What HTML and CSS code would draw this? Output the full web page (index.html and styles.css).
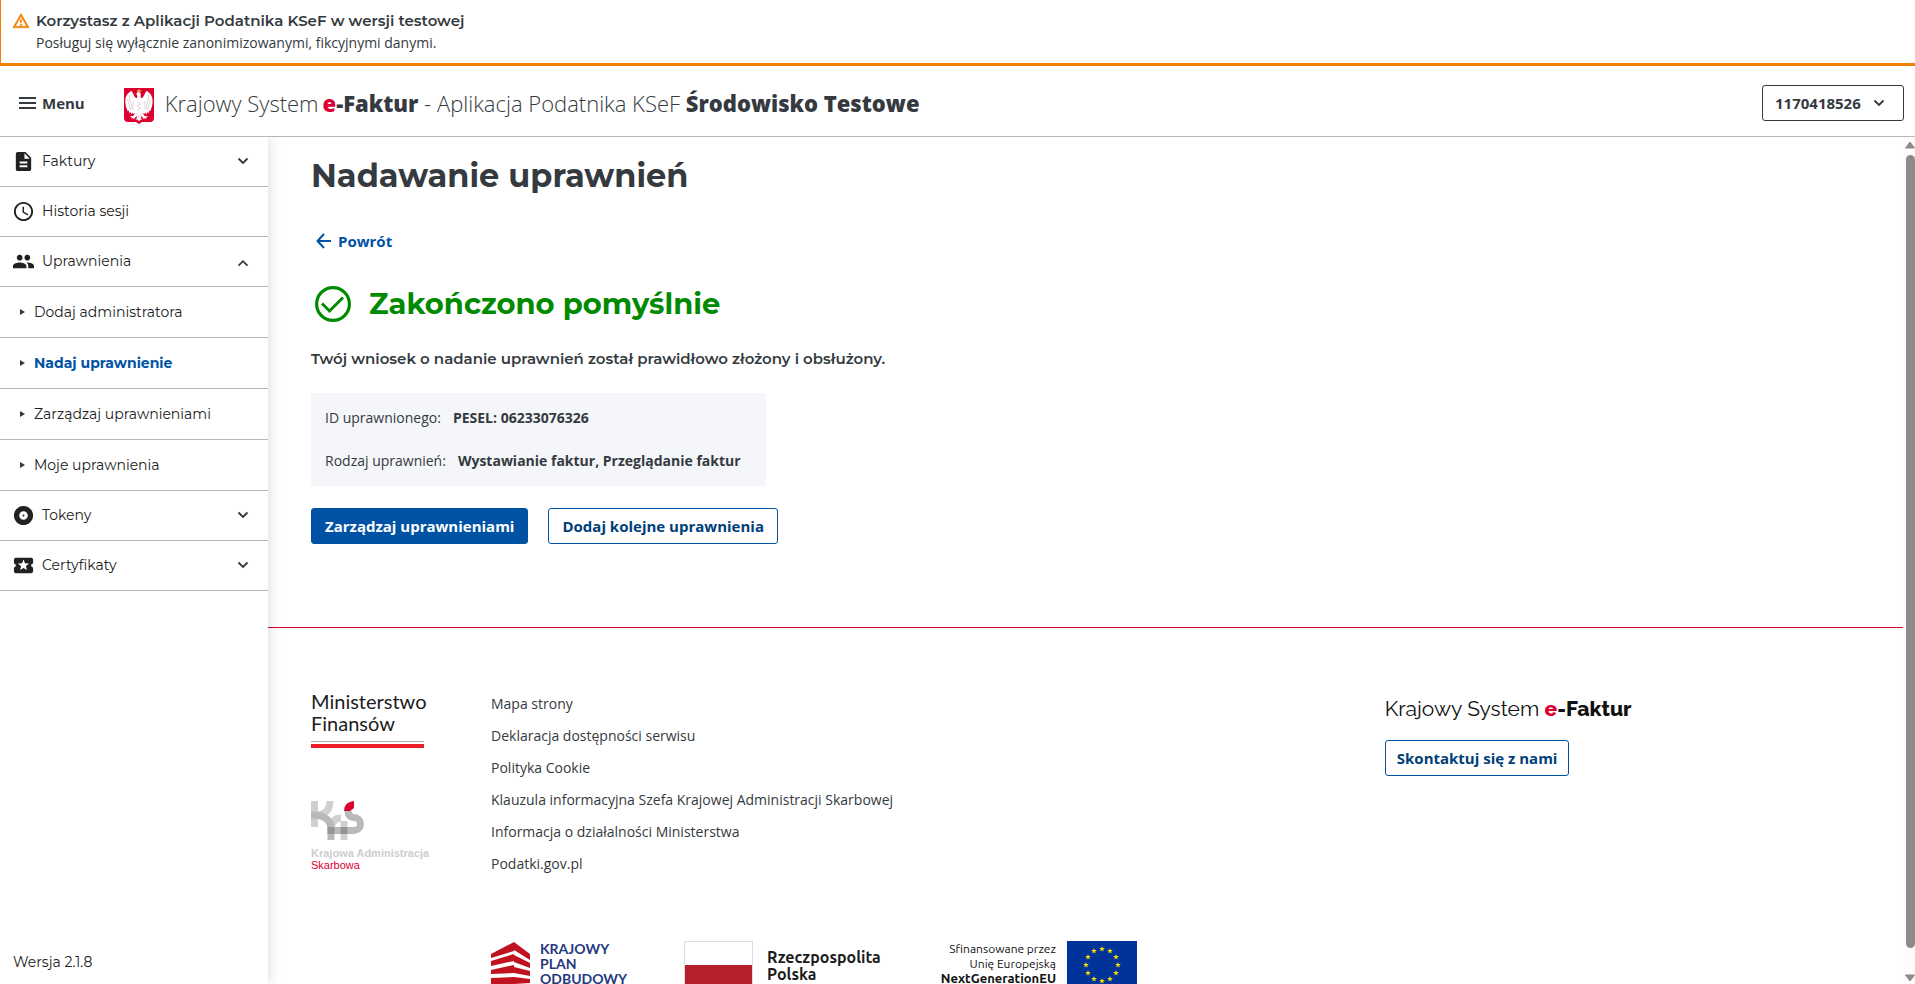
FILE: index.html
```html
<!DOCTYPE html>
<html lang="pl">
<head>
<meta charset="utf-8">
<meta name="viewport" content="width=device-width, initial-scale=1">
<title>Nadawanie uprawnień – Aplikacja Podatnika KSeF</title>
<link rel="stylesheet" href="styles.css">
</head>
<body>
<div class="banner" role="status">
  <svg class="banner-icon" viewBox="0 0 24 24" aria-hidden="true"><path fill="#f08000" stroke="#f08000" stroke-width=".6" d="M12 5.990 19.530 19H4.470L12 5.990M12 2 1 21h22L12 2zm1 14h-2v2h2v-2zm0-6h-2v4h2v-4z"/></svg>
  <div>
    <strong class="banner-title">Korzystasz z Aplikacji Podatnika KSeF w wersji testowej</strong>
    <p class="banner-text">Posługuj się wyłącznie zanonimizowanymi, fikcyjnymi danymi.</p>
  </div>
</div>

<header class="header">
  <button class="menu-button" type="button">
    <svg width="17" height="12" viewBox="0 0 17 12" aria-hidden="true"><path fill="#343a40" d="M0 0h17v2H0zM0 5h17v2H0zM0 10h17v2H0z"/></svg>
    Menu
  </button>
  <svg class="emblem" viewBox="0 0 30 36" role="img" aria-label="Godło Polski">
    <path fill="#dc0032" d="M0 0h30v30q0 4-4 4h-8l-3 2-3-2H4q-4 0-4-4z"/>
    <path fill="#fff" d="M14.200 4c-1.800.4-2 2-1.200 3.200.7 1.200.3 2.300-.6 3C10.500 9.500 9.600 6 7.700 3 4 4.300 1.500 8 1.300 12.500c-.2 4.200 1 8 2.600 11l1-1.200.3 3 1.400-1.500.5 2.700 1.600-2 .4 1.400 1.700-1c-.3 1.600-1 2.600-2.300 3.100l-2.800.3 2 1-.6 1.500 2.200-.9.500 1.600 1.500-2.300 1.700-1.300-.3 2.400-1.400 1.200 2 .1L15 33.300l1.600-1.700h2l-1.400-1.200-.3-2.400 1.700 1.300 1.500 2.300.5-1.600 2.200.9-.6-1.500 2-1-2.800-.3c-1.300-.5-2-1.500-2.300-3.100l1.700 1 .4-1.400 1.600 2 .5-2.700 1.400 1.500.3-3 1 1.200c1.600-3 2.800-6.800 2.600-11C28.500 8 26 4.300 22.300 3c-1.900 3-2.800 6.500-4.700 7.200-1-.8-1.200-2-.9-3.200.3-1.700-.8-3.200-2.500-3z"/>
    <path fill="none" stroke="#d8ccd0" stroke-width=".8" d="M5 7l3 14M3.500 11l3 11M9 13v9M25 7l-3 14M26.500 11l-3 11M21 13v9M13 14l4 2-4 2 4 2-4 2M12 25l3 4 3-4"/>
    <path fill="#eab02c" d="M13 3.800 12.700 2l1.200.6L15 1l1.100 1.600 1.200-.6-.3 1.800zM12.700 5l-1.500 1 1.600.3z"/>
  </svg>
  <div class="app-title">
    <span class="app-name">Krajowy System</span><b class="app-brand"><span class="red">e</span>-Faktur</b> - Aplikacja Podatnika KSeF <b>Środowisko Testowe</b>
  </div>
  <button class="account-button" type="button">1170418526
    <svg class="chevron" viewBox="0 0 12 8" aria-hidden="true"><path d="M1.500 1.500 6 6l4.500-4.500"/></svg>
  </button>
</header>

<div class="shell">
  <nav class="sidebar" aria-label="Menu główne">
    <ul class="nav-list">
      <li><button class="nav-item" type="button">
        <svg class="nav-icon" viewBox="0 0 24 24" aria-hidden="true"><path d="M14 2H6c-1.100 0-2 .9-2 2v16c0 1.100.9 2 2 2h12c1.100 0 2-.9 2-2V8l-6-6zm2 16H8v-2h8v2zm0-4H8v-2h8v2zm-3-5V3.500L18.500 9H13z"/></svg>
        <span>Faktury</span>
        <svg class="chevron" viewBox="0 0 12 8" aria-hidden="true"><path d="M1.500 1.500 6 6l4.500-4.500"/></svg></button></li>
      <li><a class="nav-item" href="#historia">
        <svg class="nav-icon" viewBox="0 0 24 24" aria-hidden="true"><path d="M11.990 2C6.470 2 2 6.480 2 12s4.470 10 9.990 10C17.520 22 22 17.520 22 12S17.520 2 11.990 2zM12 20c-4.420 0-8-3.580-8-8s3.580-8 8-8 8 3.580 8 8-3.580 8-8 8zm.5-13H11v6l5.250 3.150.75-1.230-4.500-2.670z"/></svg>
        <span>Historia sesji</span></a></li>
      <li><button class="nav-item" type="button" aria-expanded="true">
        <svg class="nav-icon" viewBox="0 0 24 24" aria-hidden="true"><path d="M16 11c1.660 0 2.990-1.340 2.990-3S17.660 5 16 5s-3 1.340-3 3 1.340 3 3 3zm-8 0c1.660 0 2.990-1.340 2.990-3S9.660 5 8 5 5 6.340 5 8s1.340 3 3 3zm0 2c-2.330 0-7 1.170-7 3.500V19h14v-2.500C15 14.170 10.330 13 8 13zm8 0c-.29 0-.62.020-.97.050C16.190 13.890 17 15.020 17 16.500V19h6v-2.500c0-2.330-4.670-3.500-7-3.500z"/></svg>
        <span>Uprawnienia</span>
        <svg class="chevron" viewBox="0 0 12 8" aria-hidden="true"><path d="M1.500 8.700 6 4.200l4.500 4.500"/></svg></button>
        <ul class="nav-sub">
          <li><a class="nav-subitem" href="#dodaj">Dodaj administratora</a></li>
          <li><a class="nav-subitem active" href="#nadaj" aria-current="page">Nadaj uprawnienie</a></li>
          <li><a class="nav-subitem" href="#zarzadzaj">Zarządzaj uprawnieniami</a></li>
          <li><a class="nav-subitem" href="#moje">Moje uprawnienia</a></li>
        </ul></li>
      <li><button class="nav-item" type="button">
        <svg class="nav-icon" viewBox="0 0 24 24" aria-hidden="true"><path d="M12 2C6.480 2 2 6.480 2 12s4.480 10 10 10 10-4.480 10-10S17.520 2 12 2zm0 14.500c-2.490 0-4.500-2.010-4.500-4.500S9.510 7.500 12 7.500s4.500 2.010 4.500 4.500-2.010 4.500-4.500 4.500zm0-5.500c-.55 0-1 .45-1 1s.45 1 1 1 1-.45 1-1-.45-1-1-1z"/></svg>
        <span>Tokeny</span>
        <svg class="chevron" viewBox="0 0 12 8" aria-hidden="true"><path d="M1.500 1.500 6 6l4.500-4.500"/></svg></button></li>
      <li><button class="nav-item" type="button">
        <svg class="nav-icon" viewBox="0 0 24 24" aria-hidden="true"><path d="M20 12c0-1.100.9-2 2-2V6c0-1.100-.9-2-2-2H4c-1.100 0-1.990.9-1.990 2v4c1.100 0 1.990.9 1.990 2s-.89 2-2 2v4c0 1.100.9 2 2 2h16c1.100 0 2-.9 2-2v-4c-1.100 0-2-.9-2-2zm-4.420 4.800L12 14.500l-3.580 2.300 1.080-4.120-3.290-2.690 4.240-.25L12 5.800l1.540 3.950 4.240.25-3.290 2.690 1.090 4.110z"/></svg>
        <span>Certyfikaty</span>
        <svg class="chevron" viewBox="0 0 12 8" aria-hidden="true"><path d="M1.500 1.500 6 6l4.500-4.500"/></svg></button></li>
    </ul>
    <p class="version">Wersja 2.1.8</p>
  </nav>

  <div class="page">
    <main class="content">
      <h1 class="page-title">Nadawanie uprawnień</h1>
      <a class="back-link" href="#powrot">
        <svg width="16" height="16" viewBox="0 0 16 16" aria-hidden="true"><path fill="none" stroke="#0052a5" stroke-width="2" d="M15 8H2M8 1 1.500 8 8 15"/></svg>
        Powrót</a>
      <h2 class="success">
        <svg width="36" height="36" viewBox="0 0 36 36" aria-hidden="true"><g fill="none" stroke="#008a00"><circle cx="18" cy="18" r="16.400" stroke-width="3.200"/><path stroke-width="3" d="M7 17.500l7.500 7.500L28 11.500"/></g></svg>
        Zakończono pomyślnie</h2>
      <p class="lead">Twój wniosek o nadanie uprawnień został prawidłowo złożony i obsłużony.</p>
      <dl class="summary">
        <div class="summary-row"><dt>ID uprawnionego:</dt><dd>PESEL: 06233076326</dd></div>
        <div class="summary-row"><dt>Rodzaj uprawnień:</dt><dd>Wystawianie faktur, Przeglądanie faktur</dd></div>
      </dl>
      <div class="actions">
        <button class="button primary" type="button">Zarządzaj uprawnieniami</button>
        <button class="button" type="button">Dodaj kolejne uprawnienia</button>
      </div>
    </main>

    <footer class="footer">
      <div class="logos">
        <div class="mf-logo">Ministerstwo<br>Finansów</div>
        <div class="kas-logo">
          <svg width="53" height="40" viewBox="0 0 53 40" aria-hidden="true">
            <g fill="none" stroke-width="7">
              <path stroke="#d0d0d0" d="M3.500 0v26M6 14q13-1 13-14"/>
              <path stroke="#d0d0d0" d="M20 30q0-13 10-13M33 39V20"/>
              <path stroke="#b9b9b9" d="M0 14q19 0 20 13v12M17 29.500h26a6.500 6.500 0 0 0 0-13q-6 0-6-7"/>
            </g>
            <path fill="#969696" d="M16.500 26h7v7h-7zM29.500 26h7v7h-7z"/>
            <path fill="#dc0032" d="M33 10q0-9 10-10v7l-4 3z"/>
          </svg>
          <strong>Krajowa Administracja</strong>
          <span>Skarbowa</span>
        </div>
      </div>
      <ul class="footer-links">
        <li><a href="#mapa">Mapa strony</a></li>
        <li><a href="#dostepnosc">Deklaracja dostępności serwisu</a></li>
        <li><a href="#cookie">Polityka Cookie</a></li>
        <li><a href="#klauzula">Klauzula informacyjna Szefa Krajowej Administracji Skarbowej</a></li>
        <li><a href="#informacja">Informacja o działalności Ministerstwa</a></li>
        <li><a href="#podatki">Podatki.gov.pl</a></li>
      </ul>
      <div class="contact">
        <div class="ksef-logo">Krajowy System <b><span class="red">e</span>-Faktur</b></div>
        <button class="button" type="button">Skontaktuj się z nami</button>
      </div>
      <div class="funding">
        <div class="kpo">
          <svg width="39" height="50" viewBox="0 0 39 50" aria-hidden="true"><g fill="#c1121f"><path d="M0 13 23 1v9L0 17zM0 20l23-7v7L0 25zM0 29l23-5v8L0 33zM0 37l23-1v7H0zM0 46h23v4H0z"/><path d="M23 1l16 12v6L23 9zM23 14l16 8v5l-16-6zM23 26l16 4v5l-16-3zM23 36l16 2v4l-16 1zM23 46h16v4H23z"/></g></svg>
          <span>KRAJOWY<br>PLAN<br>ODBUDOWY</span>
        </div>
        <div class="rp">
          <span class="pl-flag"></span>
          <span>Rzeczpospolita<br>Polska</span>
        </div>
        <div class="eu">
          <span class="eu-text">Sfinansowane przez<br>Unię Europejską<br><b>NextGenerationEU</b></span>
          <svg width="70" height="48" viewBox="0 0 70 48" aria-hidden="true"><defs><path id="star" fill="#ffdd00" d="M0-3 .7-.9h2.200L1.100.4l.7 2.100L0 1.200l-1.800 1.300.7-2.100L-2.900-.9h2.200z"/></defs><path fill="#003399" d="M0 0h70v48H0z"/><use href="#star" x="35" y="8"/><use href="#star" x="43" y="10"/><use href="#star" x="49" y="16"/><use href="#star" x="51" y="24"/><use href="#star" x="49" y="32"/><use href="#star" x="43" y="38"/><use href="#star" x="35" y="40"/><use href="#star" x="27" y="38"/><use href="#star" x="21" y="32"/><use href="#star" x="19" y="24"/><use href="#star" x="21" y="16"/><use href="#star" x="27" y="10"/></svg>
        </div>
      </div>
    </footer>
  </div>
  <div class="scrollbar" aria-hidden="true">
    <svg width="10" height="8" viewBox="0 0 10 8"><path fill="#8b8b8b" stroke="#8b8b8b" stroke-linejoin="round" d="M5 1 9.500 7h-9z"/></svg>
    <span class="scroll-thumb"></span>
    <svg class="scroll-down" width="10" height="8" viewBox="0 0 10 8"><path fill="#8b8b8b" stroke="#8b8b8b" stroke-linejoin="round" d="M5 7 9.500 1h-9z"/></svg>
  </div>
</div>
</body>
</html>
```
FILE: styles.css
```css
:root {
  --text: #343a40;
  --blue: #0052a5;
  --red: #dc0032;
  --line: #b6b6b6;
  --heading: Montserrat, Inter, sans-serif;
}

* { box-sizing: border-box; }

body {
  margin: 0;
  height: 100vh;
  display: flex;
  flex-direction: column;
  overflow: hidden;
  background: #fff;
  color: var(--text);
  font: 14px/20px "Open Sans", sans-serif;
}

ul, dl, dd, p, h1, h2 { margin: 0; padding: 0; }
ul { list-style: none; }
a { color: inherit; text-decoration: none; }
button { font: inherit; color: inherit; background: none; border: 0; cursor: pointer; }
svg { flex: none; }
.red { color: var(--red); }

.banner {
  display: flex;
  gap: 6px;
  padding: 10px 12px 9px 11px;
  border-left: 1px solid #f08000;
  border-bottom: 3px solid #f08000;
}
.banner-icon { width: 18px; height: 18px; margin-top: 2px; }
.banner-title { display: block; font: 600 15px/22px var(--heading); }
.banner-text { line-height: 22px; }

.header {
  display: flex;
  align-items: center;
  height: 71px;
  padding: 4px 11px 0 19px;
  border-bottom: 1px solid var(--line);
}
.menu-button {
  display: flex;
  align-items: center;
  gap: 6px;
  padding: 0;
  font-size: 15px;
  font-weight: 700;
}
.emblem { width: 30px; height: 36px; margin: 5px 0 0 39px; }
.app-title { margin-left: 11px; font-size: 22px; font-weight: 350; line-height: 30px; }
.app-title b { font-weight: 800; }
.app-name { margin-right: 4px; }
.account-button {
  display: flex;
  align-items: center;
  justify-content: space-between;
  width: 142px;
  height: 36px;
  margin-left: auto;
  padding: 0 18px 0 12px;
  border: 1px solid var(--text);
  border-radius: 3px;
  font-size: 15px;
  font-weight: 700;
}
.chevron { width: 12px; height: 8px; fill: none; stroke: #343a40; stroke-width: 1.8; overflow: visible; }

.shell { flex: 1; min-height: 0; display: flex; }

.sidebar {
  flex: none;
  display: flex;
  flex-direction: column;
  width: 268px;
  box-shadow: 2px 0 12px rgba(0, 0, 0, .12);
  clip-path: inset(0 -20px 0 0);
  color: #212121;
  font: 14px/20px var(--heading);
}
.nav-item {
  display: flex;
  align-items: center;
  gap: 7px;
  width: 100%;
  height: 50px;
  padding: 0 19px 1px 12px;
  border-bottom: 1px solid var(--line);
  text-align: left;
}
.nav-icon { width: 23px; height: 23px; fill: #212121; }
.nav-item .chevron { margin-left: auto; }
.nav-subitem {
  display: flex;
  align-items: center;
  gap: 9px;
  height: 51px;
  padding: 0 12px 1px 20px;
  border-bottom: 1px solid var(--line);
}
.nav-subitem::before {
  content: "";
  border-left: 5px solid var(--text);
  border-top: 3px solid transparent;
  border-bottom: 3px solid transparent;
}
.active { color: var(--blue); font-weight: 700; }
.version { margin-top: auto; padding: 0 13px 12px; }

.page { flex: 1; min-width: 0; overflow: hidden; }
.content { padding: 15px 43px 83px; }
.page-title { font: 700 32px/48px var(--heading); }
.back-link {
  display: flex;
  align-items: center;
  gap: 6px;
  width: max-content;
  margin: 31px 0 0 5px;
  color: var(--blue);
  font-size: 15px;
  font-weight: 700;
}
.success {
  display: flex;
  align-items: center;
  gap: 18px;
  margin: 33px 0 0 4px;
  color: #008a00;
  font: 700 29px/40px var(--heading);
}
.lead { margin-top: 25px; font: 600 15px/20px var(--heading); }
.summary {
  width: max-content;
  min-width: 455px;
  margin-top: 24px;
  padding: 14px;
  background: #f5f6fa;
}
.summary-row { display: flex; gap: 12px; line-height: 22px; }
.summary-row + .summary-row { margin-top: 21px; }
.summary dd { font-weight: 700; }
.actions { display: flex; gap: 20px; margin-top: 22px; }
.button {
  height: 36px;
  padding: 0 13px;
  border: 1px solid var(--blue);
  border-radius: 3px;
  color: #004078;
  font-size: 15px;
  font-weight: 700;
}
.primary { background: var(--blue); color: #fff; }

.footer {
  display: grid;
  grid-template-columns: 180px 12fr 7fr;
  padding: 62px 0 0 43px;
  border-top: 1px solid var(--red);
}
.mf-logo {
  position: relative;
  width: 113px;
  padding-bottom: 10px;
  border-bottom: 4px solid #ee1c25;
  color: #1c1c1c;
  font: 20px/22px Lato, sans-serif;
}
.mf-logo::after {
  content: "";
  position: absolute;
  right: 0;
  bottom: 2px;
  left: 0;
  border-bottom: 1px solid #aaa;
}
.kas-logo {
  margin-top: 53px;
  color: #cdcdcd;
  font: 11px/12px "Liberation Sans", Arial, sans-serif;
}
.kas-logo svg { display: block; margin-bottom: 6px; }
.kas-logo strong, .kas-logo span { display: block; }
.kas-logo span { color: var(--red); }
.footer-links { padding-top: 4px; }
.footer-links li { line-height: 20px; margin-bottom: 12px; }
.contact { padding: 4px 0 0 2px; }
.ksef-logo { margin-bottom: 16px; color: #111; font: 21px/30px Raleway, Lato, sans-serif; }
.ksef-logo b { font-weight: 800; }
.contact .button { padding: 0 11px; }

.funding { grid-column: 2 / -1; display: flex; margin-top: 55px; }
.kpo, .rp, .eu { display: flex; }
.kpo { gap: 10px; width: 193px; color: #253a7e; font: 700 14px/15px Lato, sans-serif; }
.rp { gap: 14px; width: 254px; color: #1c1c1c; font: 700 16px/17px Ubuntu, "Noto Sans", sans-serif; }
.rp > span + span { padding-top: 8px; }
.pl-flag {
  width: 69px;
  height: 48px;
  border: 1px solid #ddd;
  background: linear-gradient(#fff 50%, #b61f2b 50%);
}
.eu { gap: 11px; color: #111; font: 12px/15px Ubuntu, "Noto Sans", sans-serif; text-align: right; }
.eu-text { min-width: 118px; }
.eu b { font-size: 13px; }

.scrollbar {
  flex: none;
  display: flex;
  flex-direction: column;
  align-items: center;
  gap: 6px;
  width: 12px;
  padding: 4px 0 2px 2px;
  background: #fcfcfc;
}
.scroll-thumb { width: 9px; height: 793px; border-radius: 5px; background: #8b8b8b; }
.scroll-down { margin-top: auto; }
```
